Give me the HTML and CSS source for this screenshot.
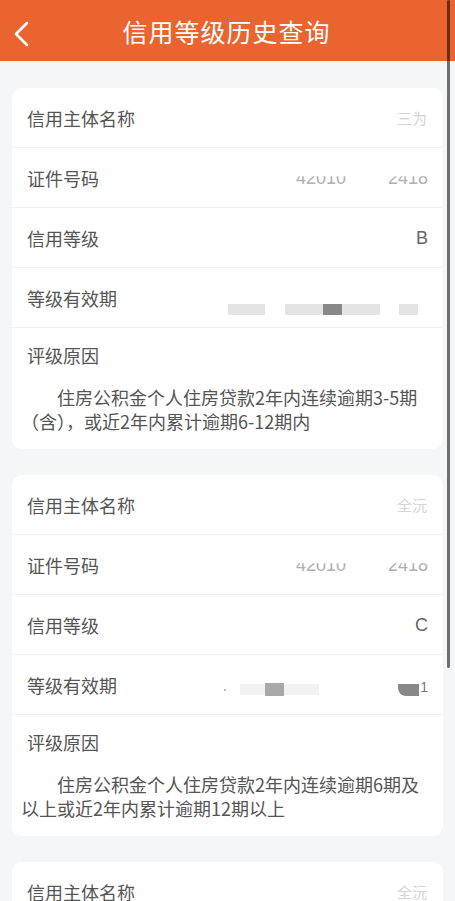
FILE: index.html
```html
<!DOCTYPE html>
<html lang="zh-CN">
<head>
<meta charset="utf-8">
<title>信用等级历史查询</title>
<link rel="stylesheet" href="styles.css">
</head>
<body>
<div class="page">
  <header class="topbar">
    <svg class="back" width="20" height="28" viewBox="0 0 20 28"><path d="M15 3 L4 14 L15 25" fill="none" stroke="#fff" stroke-width="2.6" stroke-linecap="round" stroke-linejoin="round"/></svg>
    <h1 class="title">信用等级历史查询</h1>
  </header>

  <main class="list">
    <section class="card">
      <div class="row"><span class="label">信用主体名称</span><span class="value faded name">三为</span></div>
      <div class="row"><span class="label">证件号码</span><span class="value idno"><span class="cut">42010</span><span class="cut gapid">2418</span></span></div>
      <div class="row"><span class="label">信用等级</span><span class="value">B</span></div>
      <div class="row"><span class="label">等级有效期</span>
        <span class="value blocks down1">
          <i class="blk light w37"></i>
          <i class="blk light w38 ml20"></i><i class="blk dark w19"></i><i class="blk light w38"></i>
          <i class="blk light w19 ml19"></i>
          <i class="sp10"></i>
        </span>
      </div>
      <div class="reason">
        <div class="label">评级原因</div>
        <p class="text">住房公积金个人住房贷款2年内连续逾期3-5期（含），或近2年内累计逾期6-12期内</p>
      </div>
    </section>

    <section class="card">
      <div class="row"><span class="label">信用主体名称</span><span class="value faded name">全沅</span></div>
      <div class="row"><span class="label">证件号码</span><span class="value idno"><span class="cut">42010</span><span class="cut gapid">2418</span></span></div>
      <div class="row"><span class="label">信用等级</span><span class="value">C</span></div>
      <div class="row"><span class="label">等级有效期</span>
        <span class="value blocks down2">
          <i class="dot"></i>
          <i class="blk faint w25 ml14"></i><i class="blk mid w19"></i><i class="blk faint w35"></i>
          <i class="blk dark w21 ml79 round"></i><span class="one">1</span>
        </span>
      </div>
      <div class="reason">
        <div class="label">评级原因</div>
        <p class="text">住房公积金个人住房贷款2年内连续逾期6期及以上或近2年内累计逾期12期以上</p>
      </div>
    </section>

    <section class="card">
      <div class="row"><span class="label">信用主体名称</span><span class="value faded name">全沅</span></div>
      <div class="row"><span class="label">证件号码</span><span class="value idno"><span class="cut">42010</span><span class="cut gapid">2418</span></span></div>
    </section>
  </main>

  <div class="scrollbar"></div>
</div>
</body>
</html>
```

FILE: styles.css
```css
html, body {
  margin: 0;
  padding: 0;
  height: 100%;
  overflow: hidden;
}
body {
  background: #f5f6f8;
  font-family: "Noto Sans CJK SC", "Noto Sans", "Liberation Sans", sans-serif;
  color: #555;
}
.page {
  position: relative;
  width: 455px;
  min-height: 901px;
}
.topbar {
  height: 61px;
  background: #e9642f;
  display: flex;
  align-items: center;
  justify-content: center;
  position: relative;
}
.back {
  position: absolute;
  left: 12px;
  top: 20px;
}
.title {
  margin: 0 0 0 -2px;
  font-size: 25px;
  font-weight: 400;
  color: #fff;
  letter-spacing: 1px;
}
.list {
  padding: 27px 12px 0;
  display: flex;
  flex-direction: column;
  gap: 26px;
}
.card {
  background: #fff;
  border-radius: 10px;
  overflow: hidden;
}
.row {
  height: 59px;
  border-bottom: 1px solid #f1f1f1;
  display: flex;
  align-items: center;
  justify-content: space-between;
  padding: 0 15px;
}
.label {
  font-size: 18px;
  line-height: 24px;
  color: #555;
}
.value {
  font-size: 18px;
  line-height: 24px;
  color: #666;
  font-family: "Liberation Sans", "Noto Sans CJK SC", sans-serif;
}
.faded {
  color: #d4d4d4;
  font-size: 15px;
  font-family: "Noto Sans CJK SC", sans-serif;
}
.name {
  margin-right: 1px;
  clip-path: inset(25% 0 10% 0);
}
.idno {
  display: flex;
  color: #b0b0b0;
}
.cut {
  clip-path: inset(45% 0 0 0);
}
.gapid {
  margin-left: 42px;
}
.blocks {
  display: flex;
  align-items: center;
  height: 13px;
}
.down1 { margin-top: 24px; }
.down2 { margin-top: 10px; }
.blk {
  display: block;
  height: 11px;
}
.light { background: #e4e4e4; }
.faint { background: #f2f2f2; }
.mid { background: #a9a9a9; height: 13px; }
.dark { background: #888; }
.round { border-bottom-left-radius: 8px; height: 12px; }
.w19 { width: 19px; }
.w21 { width: 21px; }
.w25 { width: 25px; }
.w35 { width: 35px; }
.w37 { width: 37px; }
.w38 { width: 38px; }
.ml14 { margin-left: 14px; }
.ml19 { margin-left: 19px; }
.ml20 { margin-left: 20px; }
.ml79 { margin-left: 79px; }
.sp10 { display: block; width: 10px; }
.dot {
  display: block;
  width: 2px;
  height: 2px;
  background: #bbb;
}
.one {
  font-size: 14px;
  line-height: 14px;
  color: #777;
  margin-left: 1px;
  margin-bottom: 6px;
}
.reason {
  padding: 15px 14px 16px 9px;
}
.reason .label {
  padding-left: 6px;
}
.text {
  margin: 18px 0 0;
  font-size: 18px;
  line-height: 24px;
  text-indent: 2em;
  color: #555;
}
.scrollbar {
  position: absolute;
  top: 0;
  left: 447px;
  width: 3px;
  height: 668px;
  border-radius: 2px;
  background: rgba(0, 0, 0, 0.55);
}
```
